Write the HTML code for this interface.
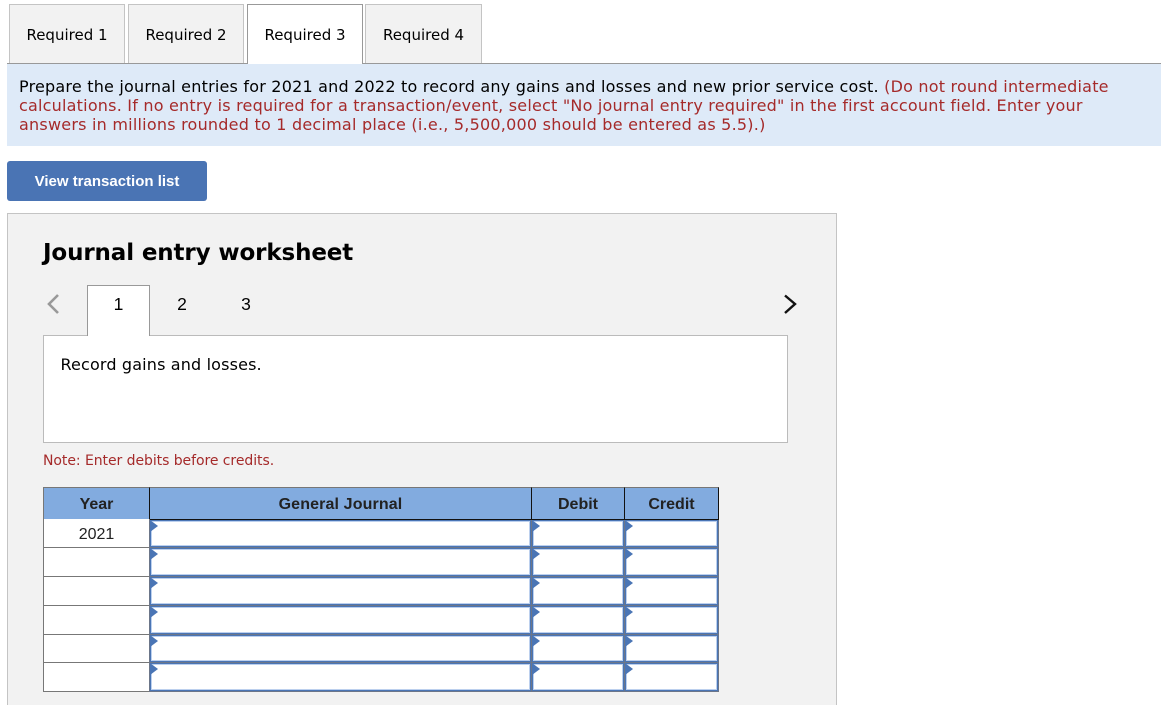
<!DOCTYPE html>
<html><head><meta charset="utf-8"><style>
html{margin:0;padding:0;background:#fff;overflow:hidden;height:705px}
body{margin:0;padding:0;background:#fff;width:1169px;height:705px;overflow:hidden;position:relative;font-family:"DejaVu Sans","Liberation Sans",sans-serif;color:#000}
div{position:absolute;box-sizing:border-box}
.t{white-space:nowrap}
.tab{top:4px;height:59px;background:#f2f2f2;border:1px solid #c4c4c4;border-bottom:none;font-size:15px;text-align:center;line-height:60px}
.ar{font-family:"Liberation Sans",sans-serif}
.line{font-size:16px;line-height:19px;left:19px;white-space:nowrap;letter-spacing:.207px}
.red{color:#a52a2a}
.h{top:487px;height:33px;background:#82abdf;border:1px solid #777;border-bottom:1.5px solid #111;font:bold 16px/33px "Liberation Sans",sans-serif;color:#222;text-align:center}
.cell{left:43px;width:107px;background:#fff;border:1px solid #777;border-top:none;font:16px/29px "Liberation Sans",sans-serif;text-align:center;color:#222}
.in{background:#fff;border:1px solid #4a75b5;box-shadow:inset 0 0 0 1px #bcd0ee}
.in:after{content:"";position:absolute;left:-1px;top:-1px;border-left:8px solid #4a75b5;border-top:6px solid transparent;border-bottom:6px solid transparent}
</style></head><body>

<div class="tab" style="left:9px;width:116px">Required 1</div>
<div class="tab" style="left:128px;width:116px">Required 2</div>
<div style="left:7px;top:63px;width:1154px;height:1px;background:#999"></div>
<div class="tab" style="left:247px;width:116px;height:60px;background:#fff;border-color:#999;z-index:2">Required 3</div>
<div class="tab" style="left:365px;width:117px">Required 4</div>

<div style="left:7px;top:64px;width:1154px;height:82px;background:#deeaf8"></div>
<div class="line" style="top:77px">Prepare the journal entries for 2021 and 2022 to record any gains and losses and new prior service cost. <span class="red">(Do not round intermediate</span></div>
<div class="line red" style="top:96px">calculations. If no entry is required for a transaction/event, select "No journal entry required" in the first account field. Enter your</div>
<div class="line red" style="top:115px;letter-spacing:.225px">answers in millions rounded to 1 decimal place (i.e., 5,500,000 should be entered as 5.5).)</div>

<div style="left:7px;top:161px;width:200px;height:40px;background:#4a74b4;border-radius:3px;color:#fff;font:bold 15px/39px 'Liberation Sans',sans-serif;text-align:center;padding-top:1px">View transaction list</div>

<div style="left:7px;top:213px;width:830px;height:492px;background:#f2f2f2;border:1px solid #c4c4c4;border-bottom:none"></div>
<div class="t" style="left:43px;top:238px;font-size:23px;line-height:30px;font-weight:bold;letter-spacing:-.13px">Journal entry worksheet</div>

<svg style="position:absolute;left:46px;top:293px" width="16" height="22"><path d="M12 2 L3 11 L12 20" fill="none" stroke="#999" stroke-width="2.6"/></svg>
<svg style="position:absolute;left:782px;top:293px" width="16" height="22"><path d="M3 2.5 L13 11 L3 20" fill="none" stroke="#111" stroke-width="2.4"/></svg>

<div style="left:43px;top:335px;width:745px;height:108px;background:#fff;border:1px solid #bbb"></div>
<div class="ar" style="left:87px;top:285px;width:63px;height:51px;background:#fff;border:1px solid #999;border-bottom:none;text-align:center;font-size:17.5px;line-height:36px">1</div>
<div class="ar" style="left:150px;top:285px;width:64px;text-align:center;font-size:17.5px;line-height:38px">2</div>
<div class="ar" style="left:214px;top:285px;width:64px;text-align:center;font-size:17.5px;line-height:38px">3</div>

<div class="t" style="left:60.5px;top:355px;font-size:16px;line-height:20px;letter-spacing:.15px">Record gains and losses.</div>
<div class="t red" style="left:43px;top:452px;font-size:14px;line-height:18px;letter-spacing:-.06px">Note: Enter debits before credits.</div>

<div class="h" style="left:43px;width:107px">Year</div>
<div class="h" style="left:149px;width:383px;border-left-color:#111;letter-spacing:.13px">General Journal</div>
<div class="h" style="left:531px;width:94px;border-left-color:#111">Debit</div>
<div class="h" style="left:624px;width:95px;border-left-color:#111;border-right-color:#111">Credit</div>

<div class="cell" style="top:519px;height:29px;line-height:31px">2021</div>
<div class="cell" style="top:548px;height:29px"></div>
<div class="cell" style="top:577px;height:29px"></div>
<div class="cell" style="top:606px;height:29px"></div>
<div class="cell" style="top:635px;height:28px"></div>
<div class="cell" style="top:663px;height:29px"></div>

<div style="left:149px;top:520px;width:570px;height:172px;background:#6c7689"></div>

<div class="in" style="left:150px;top:520px;width:381px;height:27px"></div>
<div class="in" style="left:532px;top:520px;width:92px;height:27px"></div>
<div class="in" style="left:625px;top:520px;width:93px;height:27px"></div>

<div class="in" style="left:150px;top:548px;width:381px;height:28px"></div>
<div class="in" style="left:532px;top:548px;width:92px;height:28px"></div>
<div class="in" style="left:625px;top:548px;width:93px;height:28px"></div>

<div class="in" style="left:150px;top:577px;width:381px;height:28px"></div>
<div class="in" style="left:532px;top:577px;width:92px;height:28px"></div>
<div class="in" style="left:625px;top:577px;width:93px;height:28px"></div>

<div class="in" style="left:150px;top:606px;width:381px;height:28px"></div>
<div class="in" style="left:532px;top:606px;width:92px;height:28px"></div>
<div class="in" style="left:625px;top:606px;width:93px;height:28px"></div>

<div class="in" style="left:150px;top:635px;width:381px;height:27px"></div>
<div class="in" style="left:532px;top:635px;width:92px;height:27px"></div>
<div class="in" style="left:625px;top:635px;width:93px;height:27px"></div>

<div class="in" style="left:150px;top:663px;width:381px;height:28px"></div>
<div class="in" style="left:532px;top:663px;width:92px;height:28px"></div>
<div class="in" style="left:625px;top:663px;width:93px;height:28px"></div>

</body></html>
